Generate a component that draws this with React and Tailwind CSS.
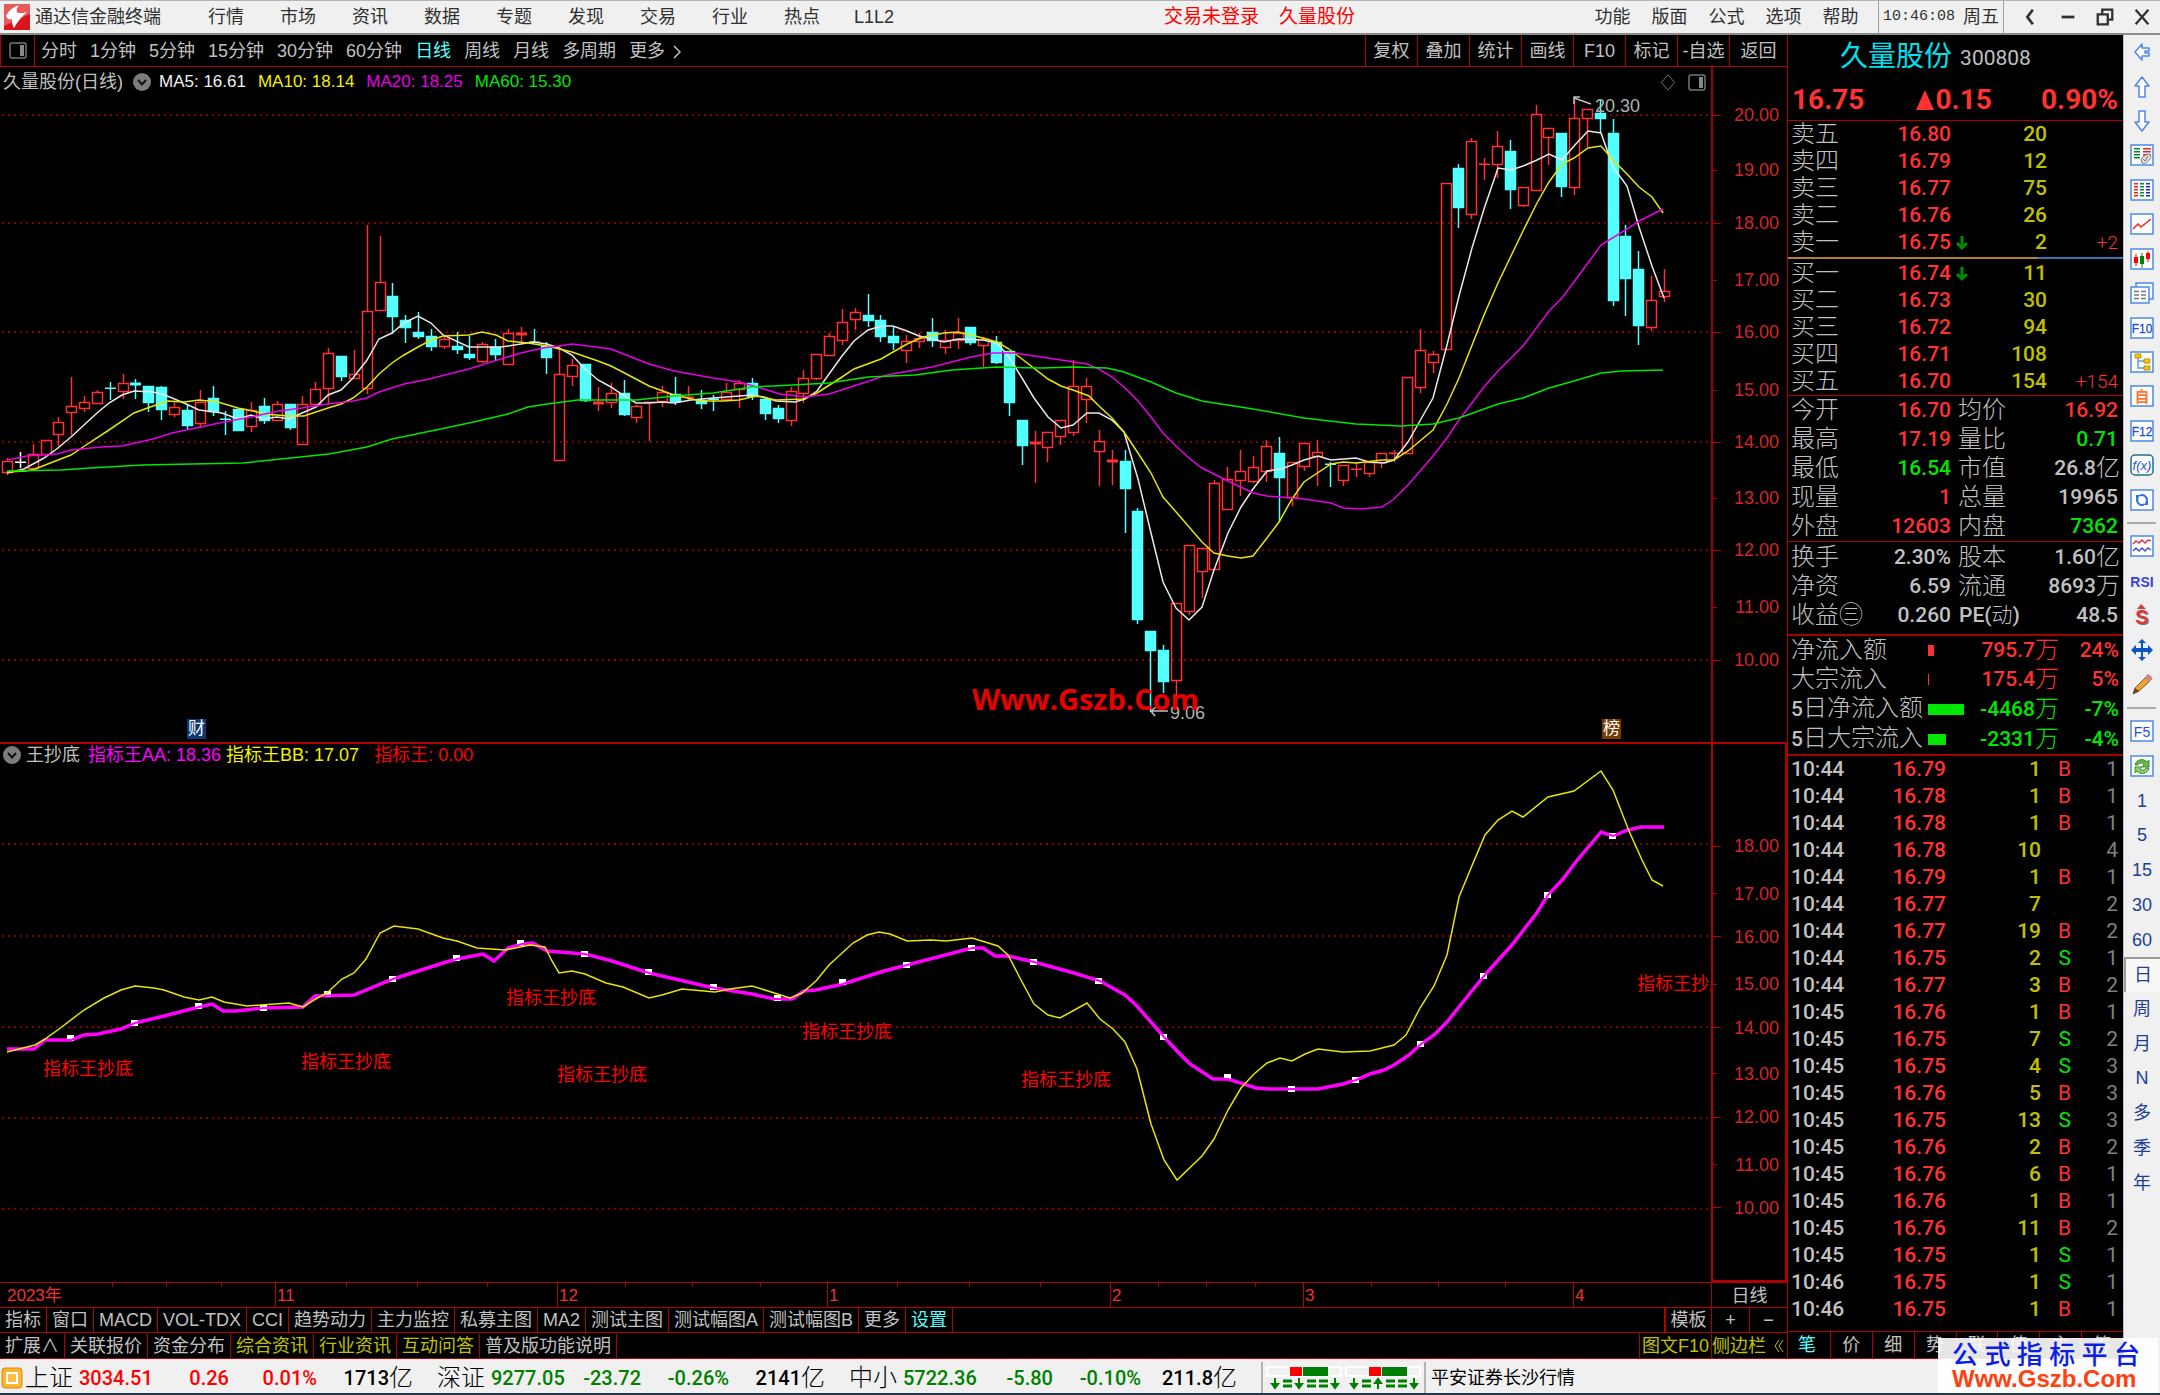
import React from "react";

/* ---------- data ---------- */

const STEP = 12.845;
const TOP = { x: 0, y: 67, w: 1711, h: 675 };
const LOW = { x: 0, y: 742, w: 1711, h: 540 };

// kind, high, body top, body bottom, low
const CANDLES = [
  ["r", 458, 461, 472, 475], ["w", 452, 462, 462, 468], ["r", 444, 454, 468, 470], ["r", 440, 440, 454, 454],
  ["r", 417, 422, 434, 446], ["r", 377, 406, 412, 435], ["r", 396, 402, 408, 412], ["r", 390, 392, 403, 403],
  ["c", 382, 388, 388, 400], ["r", 374, 383, 391, 399], ["c", 379, 383, 385, 399], ["c", 386, 386, 402, 412],
  ["c", 386, 387, 409, 420], ["r", 402, 407, 414, 417], ["c", 404, 410, 425, 429], ["r", 390, 402, 423, 428],
  ["c", 386, 398, 411, 416], ["c", 411, 419, 419, 435], ["c", 409, 409, 430, 430], ["r", 402, 410, 426, 432],
  ["c", 398, 406, 420, 424], ["r", 401, 404, 420, 420], ["c", 404, 404, 427, 430], ["r", 396, 404, 444, 444],
  ["r", 382, 389, 404, 404], ["r", 348, 353, 388, 404], ["c", 356, 356, 376, 381], ["r", 350, 374, 378, 379],
  ["r", 225, 311, 388, 394], ["r", 236, 282, 310, 310], ["c", 283, 296, 316, 334], ["c", 315, 320, 327, 343],
  ["c", 312, 332, 336, 339], ["c", 329, 336, 346, 351], ["r", 335, 339, 346, 349], ["c", 332, 346, 349, 354],
  ["c", 336, 354, 357, 360], ["r", 342, 344, 361, 363], ["c", 339, 347, 354, 361], ["r", 329, 333, 364, 364],
  ["r", 327, 333, 335, 343], ["c", 329, 342, 342, 343], ["c", 342, 346, 357, 374], ["r", 346, 374, 460, 460],
  ["r", 359, 365, 376, 386], ["c", 364, 364, 400, 402], ["r", 387, 402, 404, 411], ["r", 383, 393, 402, 408],
  ["c", 380, 393, 414, 416], ["r", 405, 406, 417, 423], ["r", 402, 402, 402, 441], ["r", 386, 392, 401, 407],
  ["c", 377, 394, 401, 405], ["r", 386, 397, 397, 401], ["c", 390, 400, 403, 409], ["c", 395, 399, 399, 411],
  ["r", 383, 392, 399, 399], ["r", 380, 383, 389, 408], ["c", 378, 383, 396, 400], ["c", 397, 399, 413, 420],
  ["c", 405, 408, 418, 423], ["r", 387, 391, 420, 426], ["r", 370, 378, 393, 403], ["r", 354, 354, 378, 380],
  ["r", 333, 336, 355, 355], ["r", 309, 322, 340, 345], ["r", 308, 312, 319, 330], ["c", 294, 315, 320, 327],
  ["c", 315, 320, 336, 342], ["c", 327, 336, 342, 350], ["r", 335, 341, 350, 363], ["r", 333, 338, 341, 348],
  ["c", 318, 332, 340, 347], ["r", 330, 340, 347, 354], ["r", 318, 333, 340, 349], ["c", 327, 327, 342, 345],
  ["r", 337, 339, 345, 367], ["c", 336, 342, 362, 364], ["c", 351, 351, 402, 416], ["c", 420, 420, 445, 465],
  ["r", 431, 442, 443, 483], ["r", 432, 432, 447, 462], ["r", 420, 420, 436, 445], ["r", 360, 386, 432, 436],
  ["r", 378, 386, 399, 423], ["r", 430, 441, 451, 486], ["r", 450, 460, 462, 485], ["c", 450, 461, 488, 533],
  ["c", 508, 511, 619, 624], ["c", 631, 631, 650, 712], ["c", 645, 650, 681, 693], ["r", 603, 603, 680, 700],
  ["r", 545, 545, 611, 615], ["r", 548, 548, 571, 598], ["r", 480, 483, 569, 569], ["r", 467, 479, 509, 509],
  ["r", 450, 471, 480, 496], ["r", 456, 467, 481, 483], ["r", 440, 446, 471, 482], ["c", 437, 453, 477, 522],
  ["r", 462, 462, 497, 506], ["r", 443, 443, 466, 471], ["r", 440, 452, 456, 486], ["c", 462, 464, 464, 487],
  ["r", 465, 465, 480, 486], ["r", 462, 469, 469, 477], ["r", 462, 462, 473, 477], ["r", 453, 453, 462, 468],
  ["r", 450, 453, 453, 462], ["r", 377, 377, 453, 453], ["r", 329, 350, 387, 393], ["r", 351, 354, 362, 373],
  ["r", 183, 183, 349, 349], ["c", 164, 168, 207, 228], ["r", 138, 141, 214, 219], ["r", 158, 164, 164, 180],
  ["r", 131, 146, 164, 178], ["c", 140, 151, 189, 209], ["r", 187, 187, 205, 207], ["r", 105, 114, 190, 190],
  ["r", 128, 128, 137, 165], ["c", 133, 133, 186, 197], ["r", 100, 118, 187, 195], ["r", 109, 109, 118, 147],
  ["c", 100, 113, 118, 133], ["c", 119, 133, 300, 306], ["c", 225, 236, 278, 316], ["c", 251, 269, 325, 345],
  ["r", 276, 300, 327, 331], ["r", 269, 291, 296, 302],
];

const MA5 =
  "7,473 24,469 44,458 58,448 71,437 97,413 109,403 122,395 134,391 153,392 165,395 184,403 199,410 222,413 238,419 251,415 264,419 277,417 289,419 302,413 316,407 328,395 341,390 353,378 367,360 379,339 392,333 404,323 418,316 431,323 443,335 469,347 501,347 521,344 533,342 547,344 559,348 572,355 584,368 598,380 611,387 623,395 636,403 649,403 662,402 674,403 691,400 713,398 739,396 752,395 764,397 776,401 795,402 805,399 817,391 829,374 842,356 854,341 868,330 882,326 893,326 907,331 919,336 932,339 944,342 958,339 983,340 997,343 1009,357 1022,378 1034,398 1048,417 1061,428 1073,425 1087,413 1099,413 1112,420 1124,432 1138,479 1151,533 1163,582 1176,608 1189,620 1202,607 1214,570 1228,533 1241,507 1253,489 1267,471 1281,469 1292,465 1304,460 1318,456 1331,460 1356,458 1369,462 1384,463 1394,460 1408,442 1421,419 1433,398 1447,345 1459,296 1472,248 1484,209 1498,168 1511,170 1523,166 1537,160 1549,154 1562,160 1574,146 1588,131 1601,133 1613,167 1627,186 1639,227 1652,266 1664,298";
const MA10 =
  "7,472 26,471 35,469 58,460 71,455 83,447 109,430 134,413 153,406 168,401 184,402 199,400 218,402 238,408 253,411 264,414 289,416 304,416 328,408 341,404 353,398 367,387 379,374 392,363 404,355 418,347 431,340 443,336 469,335 482,332 496,335 508,341 528,343 547,346 572,352 598,361 611,366 636,379 649,386 674,395 701,401 723,401 739,400 756,396 776,400 803,399 817,393 842,377 854,369 881,359 907,344 923,337 944,333 958,332 971,335 983,338 997,342 1009,349 1022,359 1048,379 1061,386 1073,390 1089,396 1099,406 1112,418 1124,432 1138,453 1151,473 1163,497 1177,513 1202,542 1214,553 1228,556 1241,558 1253,556 1267,538 1279,522 1292,499 1304,482 1331,464 1343,462 1356,463 1382,460 1394,460 1408,451 1433,430 1447,404 1459,378 1484,315 1498,283 1523,231 1537,203 1549,182 1562,164 1574,158 1588,148 1601,146 1613,160 1627,174 1639,187 1652,197 1663,213";
const MA20 =
  "7,460 27,456 57,454 71,450 101,447 122,446 153,439 172,433 191,429 224,422 251,417 279,411 302,408 328,404 353,401 367,398 379,392 404,384 429,379 457,372 469,369 494,361 521,353 543,348 559,346 572,344 611,349 649,364 674,371 713,378 739,382 764,389 780,394 805,397 829,394 854,386 887,375 932,367 971,357 993,353 1015,353 1048,358 1087,364 1099,369 1112,377 1124,387 1138,401 1151,417 1163,433 1176,446 1189,458 1202,468 1228,481 1253,493 1267,496 1304,499 1331,503 1343,508 1360,509 1382,507 1394,499 1408,485 1433,456 1447,438 1459,420 1484,387 1498,371 1523,346 1549,311 1562,298 1588,263 1601,245 1627,229 1639,221 1663,209";
const MA60 =
  "7,471 61,470 90,468 142,465 243,463 281,459 329,454 367,447 392,439 431,431 469,423 508,414 528,407 547,404 578,400 636,400 674,396 713,393 752,387 793,385 829,383 868,377 915,375 952,370 997,367 1042,368 1074,367 1107,368 1124,372 1151,382 1176,393 1202,401 1253,409 1304,418 1356,424 1401,426 1433,424 1459,418 1498,404 1523,398 1549,388 1574,381 1601,373 1622,371 1663,370";
const LINE_BB =
  "7,1052 35,1045 45,1039 59,1029 84,1010 104,998 121,990 135,986 154,988 164,990 184,997 199,1000 212,997 224,1002 247,1006 289,1003 303,1007 314,1000 328,992 342,979 354,973 366,959 380,933 394,926 418,929 443,938 457,941 477,948 505,950 530,945 545,947 552,961 559,973 572,971 585,974 606,983 623,987 649,998 662,995 682,989 715,992 730,989 752,986 790,998 802,993 816,981 829,965 853,943 867,935 879,932 890,934 907,941 931,940 946,941 972,938 998,946 1008,955 1021,980 1034,1004 1048,1015 1060,1018 1087,1003 1100,1019 1113,1029 1125,1042 1137,1069 1151,1124 1164,1160 1177,1180 1202,1156 1214,1139 1228,1110 1241,1088 1254,1074 1267,1063 1280,1058 1292,1061 1305,1054 1318,1049 1343,1052 1370,1051 1394,1045 1406,1035 1420,1008 1434,986 1447,955 1453,926 1459,897 1471,868 1485,835 1498,820 1512,811 1523,817 1548,797 1574,791 1601,771 1613,790 1629,831 1642,860 1652,880 1663,886";
const LINE_AA =
  "7,1049 34,1049 45,1040 71,1040 84,1035 98,1034 121,1029 135,1023 164,1016 199,1007 212,1004 223,1011 236,1011 264,1008 303,1007 315,996 354,995 393,979 443,963 457,959 483,954 494,961 508,948 522,944 533,943 547,951 585,954 612,961 649,973 714,988 752,994 774,999 792,999 804,991 816,990 843,984 884,971 907,965 972,948 983,948 995,956 1008,956 1034,962 1074,973 1100,981 1125,995 1137,1006 1164,1037 1177,1051 1190,1064 1213,1079 1228,1079 1256,1088 1269,1089 1318,1089 1343,1084 1356,1080 1370,1074 1384,1070 1394,1065 1409,1055 1421,1044 1434,1035 1447,1022 1471,992 1484,976 1511,946 1536,914 1548,895 1563,879 1575,863 1601,832 1613,836 1628,830 1641,827 1664,827";
const DOTS = [
  [71, 1038], [135, 1023], [199, 1006], [264, 1008], [328, 994], [393, 979], [457, 958], [521, 943], [585, 954],
  [649, 972], [714, 987], [778, 998], [843, 982], [907, 965], [972, 948], [1034, 962], [1099, 981], [1164, 1037],
  [1228, 1077], [1292, 1089], [1356, 1080], [1421, 1044], [1484, 976], [1548, 895], [1613, 836],
];
const TOP_GRID = [115, 223, 332, 442, 550, 660];
const LOW_GRID = [844, 936, 1027, 1118, 1209];
const TOP_AXIS = [
  ["20.00", 115, 1], ["19.00", 170, 0], ["18.00", 223, 1], ["17.00", 280, 0], ["16.00", 332, 1], ["15.00", 390, 0],
  ["14.00", 442, 1], ["13.00", 498, 0], ["12.00", 550, 1], ["11.00", 607, 0], ["10.00", 660, 1],
];
const LOW_AXIS = [
  ["18.00", 845, 1], ["17.00", 893, 0], ["16.00", 936, 1], ["15.00", 984, 0], ["14.00", 1028, 1], ["13.00", 1074, 0],
  ["12.00", 1118, 1], ["11.00", 1166, 0], ["10.00", 1209, 1],
];
const SIGNALS = [[43, 1068], [301, 1061], [506, 997], [557, 1074], [802, 1031], [1021, 1079], [1637, 983]];
const MONTHS = [["11", 275], ["12", 557], ["1", 827], ["2", 1110], ["3", 1303], ["4", 1573]];
const WEEKS = [112, 166, 221, 346, 417, 487, 625, 692, 760, 897, 969, 1040, 1158, 1206, 1255, 1371, 1438, 1505];

const MENU = ["行情", "市场", "资讯", "数据", "专题", "发现", "交易", "行业", "热点", "L1L2"];
const MENU_RIGHT = ["功能", "版面", "公式", "选项", "帮助"];
const PERIODS = ["分时", "1分钟", "5分钟", "15分钟", "30分钟", "60分钟", "日线", "周线", "月线", "多周期"];
const TOOLS = ["复权", "叠加", "统计", "画线", "F10", "标记", "-自选", "返回"];
const TABS = ["指标", "窗口", "MACD", "VOL-TDX", "CCI", "趋势动力", "主力监控", "私募主图", "MA2", "测试主图", "测试幅图A", "测试幅图B", "更多", "设置"];
const LINKS = [["扩展∧", 0], ["关联报价", 0], ["资金分布", 0], ["综合资讯", 1], ["行业资讯", 1], ["互动问答", 1], ["普及版功能说明", 0]];

const SELLS = [["卖五", "16.80", "20"], ["卖四", "16.79", "12"], ["卖三", "16.77", "75"], ["卖二", "16.76", "26"], ["卖一", "16.75", "2", "+2", 1]];
const BUYS = [["买一", "16.74", "11", "", 1], ["买二", "16.73", "30"], ["买三", "16.72", "94"], ["买四", "16.71", "108"], ["买五", "16.70", "154", "+154"]];

const RED = "text-[#ff3232]";
const GREEN = "text-[#00e600]";
const GRAY = "text-[#c0c0c0]";
const STATS = [
  ["今开", "16.70", RED, "均价", "16.92", "", RED],
  ["最高", "17.19", RED, "量比", "0.71", "", GREEN],
  ["最低", "16.54", GREEN, "市值", "26.8", "亿", GRAY],
  ["现量", "1", RED, "总量", "19965", "", GRAY],
  ["外盘", "12603", RED, "内盘", "7362", "", GREEN],
];
const STATS2 = [
  ["换手", "2.30%", GRAY, "股本", "1.60", "亿", GRAY],
  ["净资", "6.59", GRAY, "流通", "8693", "万", GRAY],
  ["收益㊂", "0.260", GRAY, "PE(动)", "48.5", "", GRAY],
];
const FLOWS = [
  ["净流入额", 6, "bg-[#ff3232]", "795.7", "24%", RED],
  ["大宗流入", 1, "bg-[#ff3232]", "175.4", "5%", RED],
  ["5日净流入额", 36, "bg-[#00e600]", "-4468", "-7%", GREEN],
  ["5日大宗流入", 18, "bg-[#00e600]", "-2331", "-4%", GREEN],
];
const TRADES = [
  ["10:44", "16.79", "1", "B", "1"], ["10:44", "16.78", "1", "B", "1"], ["10:44", "16.78", "1", "B", "1"],
  ["10:44", "16.78", "10", "", "4"], ["10:44", "16.79", "1", "B", "1"], ["10:44", "16.77", "7", "", "2"],
  ["10:44", "16.77", "19", "B", "2"], ["10:44", "16.75", "2", "S", "1"], ["10:44", "16.77", "3", "B", "2"],
  ["10:45", "16.76", "1", "B", "1"], ["10:45", "16.75", "7", "S", "2"], ["10:45", "16.75", "4", "S", "3"],
  ["10:45", "16.76", "5", "B", "3"], ["10:45", "16.75", "13", "S", "3"], ["10:45", "16.76", "2", "B", "2"],
  ["10:45", "16.76", "6", "B", "1"], ["10:45", "16.76", "1", "B", "1"], ["10:45", "16.76", "11", "B", "2"],
  ["10:45", "16.75", "1", "S", "1"], ["10:46", "16.75", "1", "S", "1"], ["10:46", "16.75", "1", "B", "1"],
];
const PANEL_TABS = ["笔", "价", "细", "势", "联", "值", "主", "筹"];
const INDICES = [
  ["上证", "3034.51", "0.26", "0.01%", "1713", "text-[#ff0000]"],
  ["深证", "9277.05", "-23.72", "-0.26%", "2141", "text-[#008000]"],
  ["中小", "5722.36", "-5.80", "-0.10%", "211.8", "text-[#008000]"],
];

/* ---------- helpers ---------- */

const place = (box, x, y) => ({
  left: `${((x - box.x) / box.w) * 100}%`,
  top: `${((y - box.y) / box.h) * 100}%`,
});

function Grid({ rows }) {
  return rows.map((y) => (
    <line key={y} x1="2" x2="1711" y1={y} y2={y} stroke="#a80000" strokeWidth="1.500" strokeDasharray="2 4" />
  ));
}

function Candle({ i, c }) {
  const [kind, high, top, bottom, low] = c;
  const x = Math.round(7 + i * STEP);
  const color = kind === "r" ? "#ff3232" : kind === "c" ? "#54ffff" : "#ffffff";
  const flat = bottom - top < 3;
  return (
    <g fill={kind === "r" ? "none" : color} stroke={color} strokeWidth="1.500">
      <line x1={x + 0.5} x2={x + 0.5} y1={high} y2={flat ? low : top} />
      {!flat && <line x1={x + 0.5} x2={x + 0.5} y1={bottom} y2={low} />}
      {flat ? (
        <rect x={x - 5} y={top - 0.5} width="11" height={bottom > top ? 3 : 1.5} fill={color} stroke="none" />
      ) : (
        <rect x={x - 4.5} y={top + 0.5} width="10" height={bottom - top} />
      )}
    </g>
  );
}

function Chevron() {
  return (
    <svg viewBox="0 0 18 18" className="h-[18px] w-[18px] shrink-0">
      <circle cx="9" cy="9" r="9" fill="#7c7c7c" />
      <path d="M5 7l4 4.500 4-4.500" fill="none" stroke="#111" strokeWidth="2" />
    </svg>
  );
}

function PaneIcon() {
  return (
    <svg viewBox="0 0 18 17" className="h-[17px] w-[18px]">
      <rect x="1" y="1" width="16" height="15" rx="2" fill="none" stroke="#777" strokeWidth="1.500" />
      <rect x="11" y="3" width="4" height="11" fill="#888" />
    </svg>
  );
}

function Axis({ labels, box, boxed }) {
  return (
    <div className={boxed ? "relative w-[76px] shrink-0 border-2 border-[#b00000]" : "relative w-[76px] shrink-0 border-l-2 border-[#a00000]"}>
      {labels.map(([t, y, major]) => (
        <div key={t} className="absolute inset-x-0 flex -translate-y-1/2 items-center text-[18px] leading-[20px] text-[#d22626]" style={{ top: place(box, 0, y).top }}>
          <span className={major ? "h-px w-2 bg-[#b00000]" : "h-px w-1 bg-[#b00000]"} />
          <span className={boxed ? "ml-auto mr-[6px]" : "ml-auto mr-2"}>{t}</span>
        </div>
      ))}
    </div>
  );
}

/* ---------- top bars ---------- */

function TitleBar() {
  return (
    <header className="flex h-[35px] shrink-0 items-center border-b-2 border-t border-b-[#8a8a8a] border-t-[#b4b4b4] bg-[#f0f0f0] text-[18px] text-[#303030]">
      <svg viewBox="0 0 26 26" className="ml-1 h-[26px] w-[26px]">
        <rect width="26" height="26" fill="#d8161b" />
        <path d="M0 0h26v10L0 22z" fill="#e8595c" />
        <path d="M2 12C4 8 7 4 15 1c-3 4-3 6-1 8 4 0 7 0 9-1-5 4-9 9-13 16-2-3-2-6-2-9-2 1-5 0-6-3z" fill="#fff" />
      </svg>
      <span className="ml-1 w-[156px] pl-px">通达信金融终端</span>
      <nav className="flex">
        {MENU.map((m) => (
          <button key={m} className="w-[72px] text-center">{m}</button>
        ))}
      </nav>
      <div className="ml-auto flex gap-5 text-[19px] text-[#ff0000]">
        <button>交易未登录</button>
        <button>久量股份</button>
      </div>
      <nav className="ml-[229px] flex">
        {MENU_RIGHT.map((m) => (
          <button key={m} className="w-[57px] text-center">{m}</button>
        ))}
      </nav>
      <div className="ml-[9px] flex h-8 w-[126px] items-center gap-2 border-x border-[#a0a0a0] pl-1">
        <time className="font-['Liberation_Mono',monospace] text-[15px]">10:46:08</time>
        <span>周五</span>
      </div>
      <div className="ml-2 flex">
        {[
          ["后退", <path key="a" d="M13 3L7 11l6 8" fill="none" strokeWidth="3" />],
          ["最小化", <path key="a" d="M4 11h14" fill="none" strokeWidth="3" />],
          ["还原", <path key="a" d="M3 8h11v11H3zM8 8V3h11v11h-5" fill="none" strokeWidth="2.500" />],
          ["关闭", <path key="a" d="M4 3l14 16M18 3L4 19" fill="none" strokeWidth="2.500" />],
        ].map(([label, d]) => (
          <button key={label} aria-label={label} className="flex w-[37px] justify-center">
            <svg viewBox="0 0 22 22" className="h-[20px] w-[20px]" stroke="#303030">{d}</svg>
          </button>
        ))}
      </div>
    </header>
  );
}

function PeriodBar() {
  return (
    <div className="flex h-8 shrink-0 border-b border-[#b00000] text-[18px] text-[#c0c0c0]">
      <button aria-label="面板" className="flex w-[35px] items-center justify-center border-x border-[#b00000]"><PaneIcon /></button>
      <nav className="ml-[6px] flex items-center gap-[13px] pt-[2px]">
        {PERIODS.map((p) => (
          <button key={p} className={p === "日线" ? "text-[#54ffff]" : ""}>{p}</button>
        ))}
        <button className="flex items-center gap-2">
          更多
          <svg viewBox="0 0 8 14" className="h-[14px] w-2"><path d="M1 1l6 6-6 6" fill="none" stroke="#c0c0c0" strokeWidth="1.500" /></svg>
        </button>
      </nav>
      <nav className="ml-auto flex w-[422px]">
        {TOOLS.map((t) => (
          <button key={t} className={t === "返回" ? "flex-1 whitespace-nowrap border-l border-[#b00000] pt-[2px] text-center" : "w-[52px] whitespace-nowrap border-l border-[#b00000] pt-[2px] text-center"}>{t}</button>
        ))}
      </nav>
    </div>
  );
}

/* ---------- charts ---------- */

function PriceChart() {
  return (
    <section className="flex min-h-0 grow-[675] basis-0">
      <div className="relative flex-1 overflow-hidden">
        <svg viewBox="0 67 1711 675" preserveAspectRatio="none" className="absolute inset-0 h-full w-full">
          <Grid rows={TOP_GRID} />
          {CANDLES.map((c, i) => (
            <Candle key={i} i={i} c={c} />
          ))}
          <g fill="none" strokeWidth="1.500">
            <polyline points={MA5} stroke="#e8e8e8" />
            <polyline points={MA10} stroke="#e6e600" />
            <polyline points={MA20} stroke="#e600e6" />
            <polyline points={MA60} stroke="#00e600" />
          </g>
          <g fill="none" stroke="#c0c0c0" strokeWidth="1.500">
            <path d="M1574 98l17 6M1580 97h-6v7" />
            <path d="M1151 711h17M1156 707l-5 4 4 5" />
          </g>
        </svg>
        <div className="relative flex h-[30px] items-center pl-[3px] text-[17px]">
          <span className="text-[18px] text-[#c0c0c0]">久量股份(日线)</span>
          <span className="ml-[10px] mr-2 flex"><Chevron /></span>
          <span className="flex gap-[12px]">
            <span className="text-[#f0f0f0]">MA5: 16.61</span>
            <span className="text-[#f0f000]">MA10: 18.14</span>
            <span className="text-[#e600e6]">MA20: 18.25</span>
            <span className="text-[#00e600]">MA60: 15.30</span>
          </span>
          <span className="ml-auto mr-[5px] flex items-center gap-[12px]">
            <svg viewBox="0 0 16 18" className="h-[17px] w-4"><path d="M8 1l7 8-7 8-7-8z" fill="none" stroke="#777" /></svg>
            <PaneIcon />
          </span>
        </div>
        <span className="absolute -translate-y-1/2 text-[18px] text-[#b0b0b0]" style={place(TOP, 1595, 106)}>20.30</span>
        <span className="absolute -translate-y-1/2 text-[18px] text-[#b0b0b0]" style={place(TOP, 1170, 713)}>9.06</span>
        <span className="absolute -translate-y-1/2 font-['Open_Sans',sans-serif] text-[29px] font-bold leading-[28px] text-[#e60000]" style={place(TOP, 972, 699)}>Www.Gszb.Com</span>
        <span className="absolute bottom-[3px] w-[19px] bg-[#0a3a70] text-center text-[17px] leading-[20px] text-white" style={{ left: place(TOP, 187, 0).left }}>财</span>
        <span className="absolute bottom-[3px] w-[19px] bg-[#7a3a00] text-center text-[17px] leading-[20px] text-white" style={{ left: place(TOP, 1602, 0).left }}>榜</span>
      </div>
      <Axis labels={TOP_AXIS} box={TOP} />
    </section>
  );
}

function IndicatorChart() {
  return (
    <section className="flex min-h-0 grow-[540] basis-0">
      <div className="relative flex-1 overflow-hidden border-t-2 border-[#b00000]">
        <svg viewBox="0 744 1711 538" preserveAspectRatio="none" className="absolute inset-0 h-full w-full">
          <Grid rows={LOW_GRID} />
          <polyline points={LINE_AA} fill="none" stroke="#ff00ff" strokeWidth="3.500" />
          {DOTS.map(([x, y]) => (
            <rect key={x} x={x - 4} y={y - 3} width="7" height="6" fill="#fff" />
          ))}
          <polyline points={LINE_AA} fill="none" stroke="#ff00ff" strokeWidth="2" />
          <polyline points={LINE_BB} fill="none" stroke="#e6e600" strokeWidth="1.500" />
        </svg>
        <div className="relative flex h-[22px] items-center pl-[3px] text-[18px]">
          <Chevron />
          <span className="ml-[5px] text-[#c0c0c0]">王抄底</span>
          <span className="ml-2 text-[#ff00ff]">指标王AA: 18.36</span>
          <span className="ml-[5px] text-[#f0f000]">指标王BB: 17.07</span>
          <span className="ml-[15px] text-[#ff0000]">指标王: 0.00</span>
        </div>
        {SIGNALS.map(([x, y]) => (
          <span key={x} className="absolute -translate-y-1/2 whitespace-nowrap text-[18px] leading-[20px] text-[#ff0000]" style={place(LOW, x, y)}>指标王抄底</span>
        ))}
      </div>
      <Axis labels={LOW_AXIS} box={LOW} boxed />
    </section>
  );
}

function DateAxis() {
  return (
    <div className="flex h-[25px] shrink-0 border-t border-[#b00000] text-[17px] leading-[26px] text-[#ee3030]">
      <div className="relative flex-1 overflow-hidden">
        <span className="pl-[7px]">2023年</span>
        {WEEKS.map((x) => (
          <span key={x} className="absolute top-0 h-1 w-px bg-[#b00000]" style={{ left: place(TOP, x, 0).left }} />
        ))}
        {MONTHS.map(([m, x]) => (
          <span key={m} className="absolute top-0 h-full border-l border-[#b00000] pl-px" style={{ left: place(TOP, x, 0).left }}>{m}</span>
        ))}
      </div>
      <button className="w-[76px] border-l border-[#b00000] text-center text-[18px] text-[#c0c0c0]">日线</button>
    </div>
  );
}

function BottomTabs() {
  return (
    <>
      <nav className="flex h-[25px] shrink-0 items-stretch border-t border-[#b00000] text-[18px] leading-[24px] text-[#c0c0c0]">
        {TABS.map((t) => (
          <button key={t} className={t === "设置" ? "whitespace-nowrap border-r border-[#b00000] px-[5px] text-[#54ffff]" : "whitespace-nowrap border-r border-[#b00000] px-[5px]"}>{t}</button>
        ))}
        <button className="ml-auto w-[47px] border-l-2 border-[#b00000]">模板</button>
        <button className="w-[38px] border-l border-[#b00000]">+</button>
        <button className="w-[38px] border-l border-[#b00000]">−</button>
      </nav>
      <nav className="flex h-[27px] shrink-0 items-stretch border-y border-[#b00000] pt-px text-[18px] leading-[24px] text-[#c0c0c0]">
        {LINKS.map(([t, hot]) => (
          <button key={t} className={hot ? "whitespace-nowrap border-r border-[#b00000] px-[5px] text-[#c0c000]" : "whitespace-nowrap border-r border-[#b00000] px-[5px]"}>{t}</button>
        ))}
        <button className="ml-auto w-[72px] whitespace-nowrap border-l border-[#b00000] text-[#c0c000]">图文F10</button>
        <button className="flex w-[76px] items-center gap-2 whitespace-nowrap border-l border-[#b00000] text-[#c0c000]">
          侧边栏
          <svg viewBox="0 0 10 14" className="h-[14px] w-[10px]"><path d="M5 1L1 7l4 6M9 1L5 7l4 6" fill="none" stroke="#c0c000" /></svg>
        </button>
      </nav>
    </>
  );
}

/* ---------- quote panel ---------- */

function Book({ rows }) {
  return (
    <table className="w-full table-fixed">
      <colgroup>
        <col className="w-[68px]" /><col className="w-[95px]" /><col className="w-[20px]" /><col className="w-[76px]" /><col />
      </colgroup>
      <tbody>
        {rows.map(([name, price, vol, delta, down]) => (
          <tr key={name} className="h-[27px] text-right text-[21px] font-medium leading-[27px]">
            <th scope="row" className="pl-[3px] text-left text-[24px] font-light text-[#c0c0c0]">{name}</th>
            <td className="text-[#ff3232]">{price}</td>
            <td>
              {down ? (
                <svg viewBox="0 0 14 16" className="ml-1 h-4 w-[14px]"><path d="M7 1v12M2 8l5 5 5-5" fill="none" stroke="#008c00" strokeWidth="3" /></svg>
              ) : null}
            </td>
            <td className="text-[#c0c000]">{vol}</td>
            <td className="pr-[5px] text-[19px] font-light text-[#ff3232]">{delta}</td>
          </tr>
        ))}
      </tbody>
    </table>
  );
}

function Stats({ rows }) {
  return (
    <table className="w-full table-fixed">
      <colgroup>
        <col className="w-[80px]" /><col className="w-[83px]" /><col className="w-[77px]" /><col />
      </colgroup>
      <tbody>
        {rows.map(([a, av, ac, b, bv, unit, bc]) => (
          <tr key={a} className="h-[29px] text-right text-[21px] font-medium leading-[29px]">
            <th scope="row" className="whitespace-nowrap pl-[3px] text-left text-[24px] font-light text-[#c0c0c0]">{a}</th>
            <td className={ac}>{av}</td>
            {b === "PE(动)" ? (
              <th scope="row" className="whitespace-nowrap pl-2 text-left font-medium text-[#c0c0c0]">PE(<span className="font-light">动</span>)</th>
            ) : (
              <th scope="row" className="whitespace-nowrap pl-[7px] text-left text-[24px] font-light text-[#c0c0c0]">{b}</th>
            )}
            <td className={bc}>
              <span className={unit ? "flex items-center justify-end pr-[3px]" : "flex items-center justify-end pr-[5px]"}>
                {bv}
                {unit && <span className="text-[24px] font-light">{unit}</span>}
              </span>
            </td>
          </tr>
        ))}
      </tbody>
    </table>
  );
}

function QuotePanel() {
  return (
    <aside className="flex w-[336px] shrink-0 flex-col border-l border-[#b00000] font-['Roboto','Noto_Sans_CJK_SC',sans-serif]">
      <div className="flex h-[42px] items-center justify-center gap-2 pr-10 pt-[2px]">
        <h1 className="text-[28px] text-[#00e0f0]">久量股份</h1>
        <span className="pt-1 text-[21px] text-[#c0c0c0]">300808</span>
      </div>
      <div className="flex h-[43px] items-center justify-between pl-1 pr-[5px] pt-[2px] text-[28px] font-bold text-[#ff3232]">
        <span>16.75</span>
        <span className="flex items-center">
          <svg viewBox="0 0 18 20" className="h-[20px] w-[22px]"><path d="M9 0l9 20H0z" fill="#ff3232" /></svg>
          0.15
        </span>
        <span>0.90%</span>
      </div>
      <div className="border-t border-[#b00000]"><Book rows={SELLS} /></div>
      <div className="my-px flex h-[2px]">
        <span className="w-[250px] bg-[#b07f30]" />
        <span className="flex-1 bg-[#2f78b4]" />
      </div>
      <Book rows={BUYS} />
      <div className="border-t border-[#b00000]"><Stats rows={STATS} /></div>
      <div className="border-t border-[#b00000] pb-1 pt-px"><Stats rows={STATS2} /></div>
      <div className="border-t-2 border-[#a00000]">
        <table className="w-full table-fixed">
          <colgroup>
            <col className="w-[140px]" /><col className="w-[40px]" /><col className="w-[91px]" /><col />
          </colgroup>
          <tbody>
            {FLOWS.map(([name, w, bar, v, pct, color]) => (
              <tr key={name} className="h-[29px] text-right text-[21px] font-medium leading-[29px]">
                <th scope="row" className="whitespace-nowrap pl-[3px] text-left text-[24px] font-light text-[#c0c0c0]">
                  {name[0] === "5" ? <><span className="text-[21px] font-medium">5</span>{name.slice(1)}</> : name}
                </th>
                <td><span className={`block h-[11px] ${bar}`} style={{ width: w }} /></td>
                <td className={color}>
                  <span className="flex items-center justify-end">{v}<span className="text-[24px] font-light">万</span></span>
                </td>
                <td className={`pr-1 ${color}`}>{pct}</td>
              </tr>
            ))}
          </tbody>
        </table>
      </div>
      <div className="flex-1 border-t-2 border-[#a00000]">
        <table className="w-full table-fixed">
          <colgroup>
            <col className="w-[68px]" /><col className="w-[90px]" /><col className="w-[95px]" /><col className="w-[36px]" /><col />
          </colgroup>
          <tbody>
            {TRADES.map(([t, p, v, side, n], i) => (
              <tr key={i} className="h-[27px] text-right text-[21px] font-medium leading-[27px]">
                <td className="pl-[3px] text-left text-[#c0c0c0]">{t}</td>
                <td className="text-[#ff3232]">{p}</td>
                <td className="text-[#c0c000]">{v}</td>
                <td className={side === "S" ? "pr-[6px] font-normal text-[#00e600]" : "pr-[6px] font-normal text-[#ff3232]"}>{side}</td>
                <td className="pr-[5px] font-normal text-[#808080]">{n}</td>
              </tr>
            ))}
          </tbody>
        </table>
      </div>
      <nav className="grid h-[28px] grid-cols-8 border-y border-[#b00000] text-[18px] leading-[26px] text-[#c0c0c0]">
        {PANEL_TABS.map((t, i) => (
          <button key={t} className={i === 0 ? "pr-1 text-[#54ffff]" : "border-l border-[#b00000]"}>{t}</button>
        ))}
      </nav>
    </aside>
  );
}

/* ---------- icon rail ---------- */

const frame = <rect x="1" y="1" width="22" height="20" fill="#fff" stroke="#4a8ae6" strokeWidth="1.500" />;
const arrow = (d) => <path d={d} fill="#fff" stroke="#4f86e8" strokeWidth="1.500" strokeLinejoin="round" />;
const bars = (x, w, color, n) =>
  Array.from({ length: n }, (_, i) => <rect key={`${x}-${i}`} x={x} y={4 + i * 3} width={w} height="1.500" fill={color} />);
const glyph = { fontFamily: "Liberation Sans, sans-serif" };

const RAIL_A = [
  ["后退", arrow("M5 11l7-8v4h7v3h-4v2h4v3h-7v4z")],
  ["上移", arrow("M12 1l7 9h-4v11H9V10H5z")],
  ["下移", arrow("M12 21l7-9h-4V1H9v11H5z")],
  ["报价", <>{frame}{bars(4, 6, "#00882a", 4)}{bars(13, 8, "#f02020", 3)}<path d="M11 16c0-2 5-6 8-6 3 1 2 4 0 6-2 3-5 4-7 3z" fill="#ddd" stroke="#777" /><path d="M13 15l2 2 3-5" fill="none" stroke="#777" /></>],
  ["列表", <>{frame}{bars(4, 4, "#f02020", 5)}{bars(10, 4, "#00882a", 5)}{bars(16, 4, "#2020e0", 5)}</>],
  ["分时图", <>{frame}<path d="M3 16l5-5 3 3 10-8" fill="none" stroke="#f02020" strokeWidth="1.500" /></>],
  ["K线", <>{frame}<path d="M6 6v12M18 3v11" stroke="#f00" /><path d="M12 5v15" stroke="#008000" /><path d="M4 9h4v6H4zM16 5h4v6h-4z" fill="#f00" /><path d="M10 8h4v8h-4z" fill="#008000" /></>],
  ["多窗口", <><rect x="6" y="1" width="17" height="16" fill="#fff" stroke="#4a8ae6" strokeWidth="1.500" /><rect x="1" y="5" width="18" height="16" fill="#fff" stroke="#4a8ae6" strokeWidth="1.500" /><path d="M4 9.500h5M11 9.500h5M4 13h5M11 13h5M4 16.500h5M11 16.500h5" stroke="#777" strokeWidth="1.500" /></>],
  ["F10", <>{frame}<text x="12" y="16" textAnchor="middle" fontSize="12" fill="#1f4fd0" stroke="#1f4fd0" strokeWidth="0.300" style={glyph}>F10</text></>],
  ["结构", <>{frame}<path d="M8 6v11h6M8 10h6" fill="none" stroke="#5a9ae8" strokeWidth="1.500" /><path d="M5 3h6v4H5zM14 8h6v4h-6zM14 15h6v4h-6z" fill="#f5c518" stroke="#c98d00" /></>],
  ["自选", <>{frame}<text x="12" y="16.500" textAnchor="middle" fontSize="15" fontWeight="bold" fill="#ff7733" style={{ fontFamily: "Noto Sans CJK SC, sans-serif" }}>自</text></>],
  ["F12", <>{frame}<text x="12" y="16" textAnchor="middle" fontSize="12" fill="#1f4fd0" stroke="#1f4fd0" strokeWidth="0.300" style={glyph}>F12</text></>],
  ["公式", <><rect x="1" y="1" width="22" height="20" rx="4" fill="#fff" stroke="#1f6f8f" strokeWidth="1.500" /><text x="12" y="16" textAnchor="middle" fontSize="13" fontStyle="italic" fill="#1f4fd0" style={glyph}>f(x)</text></>],
  ["刷新", <>{frame}<path d="M10 6.500a5 5 0 0 1 6 7.500M14 15.500a5 5 0 0 1-6-7.500" fill="none" stroke="#2f74d8" strokeWidth="2" /><path d="M13 16l5 0v-4zM11 6H6v4z" fill="#2f74d8" /></>],
];
const RAIL_B = [
  ["指标", <>{frame}<path d="M3 9l3-3 3 2 3-3 3 3 3-3 3 1" fill="none" stroke="#e03050" strokeWidth="1.500" /><path d="M3 16l3-3 3 3 3-3 3 3 3-3 3 2" fill="none" stroke="#4050d0" strokeWidth="1.500" /></>],
  ["RSI", <text x="12" y="17" textAnchor="middle" fontSize="14" fontWeight="bold" fill="#3a44d6" style={glyph}>RSI</text>],
  ["资金", <><text x="13" y="21" textAnchor="middle" fontSize="20" fontWeight="bold" fill="#777" style={glyph}>S</text><text x="12" y="20" textAnchor="middle" fontSize="20" fontWeight="bold" fill="#d83a3a" style={glyph}>S</text><path d="M7 5l4-5 5 5z" fill="#d83a3a" /></>],
  ["移动", <path d="M12 0l4 4h-3v5h5V6l5 5-5 5v-3h-5v5h3l-4 4-4-4h3v-5H6v3l-5-5 5-5v3h5V4H8z" fill="#0a55c0" />],
  ["画笔", <><path d="M3 20l2-6L16 3l4 4L9 17z" fill="#f0a030" stroke="#8a5a20" /><path d="M15 4l2-3c2-1 5 2 5 4l-3 3z" fill="#e08080" stroke="#999" /><path d="M3 20l2-6 4 3z" fill="#604020" /></>],
];
const RAIL_C = [
  ["F5", <>{frame}<text x="12" y="16.500" textAnchor="middle" fontSize="14" fill="#1f4fd0" style={glyph}>F5</text></>],
  ["更新", <>{frame}<path d="M5 10c1-6 9-7 12-3l2-2v7h-7l2-2c-2-3-5-2-6 0z" fill="#66b84a" stroke="#3c8f28" /><path d="M19 13c-1 6-9 7-12 3l-2 2v-6h7l-2 2c2 2 5 1 6-1z" fill="#88d068" stroke="#3c8f28" /></>],
];
const RAIL_TEXT = ["1", "5", "15", "30", "60", "日", "周", "月", "N", "多", "季", "年"];

function IconButtons({ items }) {
  return items.map(([label, art]) => (
    <button key={label} aria-label={label} className="flex items-center justify-center">
      <svg viewBox="0 0 24 22" className="h-[22px] w-6">{art}</svg>
    </button>
  ));
}

function Rail() {
  return (
    <nav className="flex w-[37px] shrink-0 flex-col border-l border-[#c0c0c0] bg-[#f0f0f0] text-[18px] text-[#1c3f94]">
      <div className="grid h-[482px] auto-rows-fr"><IconButtons items={RAIL_A} /></div>
      <hr className="my-[5px] ml-[3px] mr-1 border-t-2 border-[#a8a8a8]" />
      <div className="grid h-[173px] auto-rows-fr"><IconButtons items={RAIL_B} /></div>
      <hr className="my-[5px] ml-[3px] mr-1 border-t-2 border-[#a8a8a8]" />
      <div className="grid h-[486px] auto-rows-fr">
        <IconButtons items={RAIL_C} />
        {RAIL_TEXT.map((t) => (
          <button key={t} className={t === "日" ? "border-l-2 border-t-2 border-[#9a9a9a] bg-[#f8f8f8]" : "pt-px"}>{t}</button>
        ))}
      </div>
    </nav>
  );
}

/* ---------- status bar ---------- */

function Gauge({ marks }) {
  return (
    <svg viewBox="0 0 76 28" className="h-7 w-[76px]">
      <rect x="1" y="3" width="74" height="9" fill="#f0f0f0" stroke="#fff" strokeWidth="2" />
      <rect x="24" y="3" width="12" height="9" fill="#ff0000" />
      <rect x="37" y="3" width="25" height="9" fill="#008000" />
      {marks.map((m, i) => {
        const x = 5 + i * 12;
        if (m === "=") return <path key={i} d={`M${x} 17h9M${x} 22h9`} stroke="#008000" strokeWidth="3" />;
        return (
          <path key={i} d={m === "d" ? `M${x + 4} 14v10M${x + 1} 20l3 4 3-4z` : `M${x + 4} 25v-10M${x + 1} 19l3-4 3 4z`} stroke="#008000" strokeWidth="2" fill="#008000" />
        );
      })}
    </svg>
  );
}

function StatusBar() {
  return (
    <footer className="flex h-9 shrink-0 items-center border-b-2 border-[#24384a] bg-[#f0f0f0] pt-[3px] font-['Roboto','Noto_Sans_CJK_SC',sans-serif] text-black">
      <svg viewBox="0 0 22 22" className="ml-px mr-[2px] h-[22px] w-[22px] shrink-0">
        <rect x="1" y="1" width="20" height="20" rx="3" fill="#ffb52e" stroke="#d98a10" />
        <rect x="5" y="5" width="12" height="12" fill="#fff" />
        <rect x="7" y="7" width="8" height="8" fill="#ffc04a" />
      </svg>
      {INDICES.map(([name, v, ch, pct, amt, color]) => (
        <div key={name} className={`grid w-[412px] shrink-0 grid-cols-[54px_84px_66px_88px_96px] items-center text-[20px] font-medium ${color}`}>
          <span className="text-[24px] font-light leading-none text-black">{name}</span>
          <span>{v}</span>
          <span className="text-right">{ch}</span>
          <span className="text-right">{pct}</span>
          <span className="flex items-center justify-end text-black">{amt}<span className="text-[24px] font-light leading-none">亿</span></span>
        </div>
      ))}
      <div className="flex h-full items-center gap-[3px] border-x-2 border-[#b4b4b4] px-[3px]">
        <Gauge marks={["d", "=", "d", "=", "=", "d"]} />
        <Gauge marks={["d", "=", "u", "=", "=", "d"]} />
      </div>
      <span className="ml-[5px] text-[18px]">平安证券长沙行情</span>
    </footer>
  );
}

function SiteBadge() {
  return (
    <div className="absolute bottom-[2px] right-[2px] w-[220px] bg-white/90 pb-[2px] pl-[14px] pr-[18px]">
      <div className="flex justify-between font-['Noto_Sans_CJK_SC',sans-serif] text-[26px] font-medium leading-[29px] text-[#0a1ee6]">
        {[..."公式指标平台"].map((c) => (
          <span key={c}>{c}</span>
        ))}
      </div>
      <div className="font-['Liberation_Sans',sans-serif] text-[24px] font-bold leading-[24px] text-[#ff4010]">Www.Gszb.Com</div>
    </div>
  );
}

export default function App() {
  return (
    <div className="relative flex min-h-screen flex-col bg-black font-['Liberation_Sans','Noto_Sans_CJK_SC',sans-serif]">
      <TitleBar />
      <div className="flex flex-1">
        <main className="flex min-w-0 flex-1 flex-col">
          <PeriodBar />
          <PriceChart />
          <IndicatorChart />
          <DateAxis />
          <BottomTabs />
        </main>
        <QuotePanel />
        <Rail />
      </div>
      <StatusBar />
      <SiteBadge />
    </div>
  );
}
